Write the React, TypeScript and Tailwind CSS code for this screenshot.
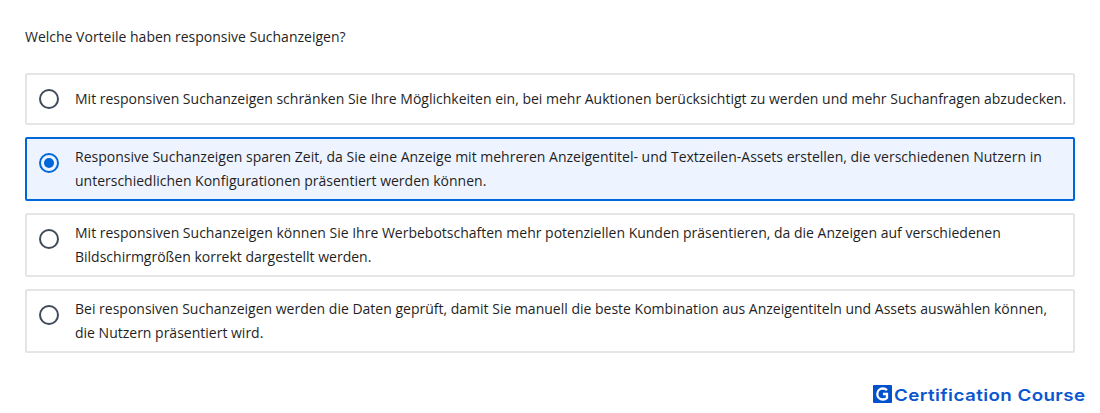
const options = [
  { text: ["Mit responsiven Suchanzeigen schränken Sie Ihre Möglichkeiten ein, bei mehr Auktionen berücksichtigt zu werden und mehr Suchanfragen abzudecken."], selected: false },
  { text: ["Responsive Suchanzeigen sparen Zeit, da Sie eine Anzeige mit mehreren Anzeigentitel- und Textzeilen-Assets erstellen, die verschiedenen Nutzern in", "unterschiedlichen Konfigurationen präsentiert werden können."], selected: true },
  { text: ["Mit responsiven Suchanzeigen können Sie Ihre Werbebotschaften mehr potenziellen Kunden präsentieren, da die Anzeigen auf verschiedenen", "Bildschirmgrößen korrekt dargestellt werden."], selected: false },
  { text: ["Bei responsiven Suchanzeigen werden die Daten geprüft, damit Sie manuell die beste Kombination aus Anzeigentiteln und Assets auswählen können,", "die Nutzern präsentiert wird."], selected: false },
];

function Radio({ selected }: { selected: boolean }) {
  return (
    <span className={selected ? "mt-3.5 flex size-5 shrink-0 items-center justify-center self-start rounded-full border-2 border-[#0067db]" : "mt-3.5 flex size-5 shrink-0 items-center justify-center self-start rounded-full border-2 border-[#414b5a] bg-white"}>
      {selected && <span className="size-2.5 rounded-full bg-[#0067db]" />}
    </span>
  );
}

export default function App() {
  return (
    <main className="flex h-[413px] w-[1100px] flex-col bg-white px-[25px] pt-[25px] font-['Open_Sans',sans-serif] text-sm leading-6 text-[#1f1f1f]">
      <p>Welche Vorteile haben responsive Suchanzeigen?</p>
      <div className="mt-6 flex flex-col gap-3">
        {options.map((o) => (
          <label
            key={o.text[0]}
            className={
              (o.selected ? "border-[#0067db] bg-[#eef4ff] " : "border-[#e5e5e5] bg-white ") +
              (o.text.length > 1 ? "h-16 " : "h-[52px] ") +
              "flex items-center gap-4 rounded-xs border-2 pl-3"
            }
          >
            <Radio selected={o.selected} />
            <span className="flex flex-col whitespace-nowrap">
              {o.text.map((line) => <span key={line}>{line}</span>)}
            </span>
          </label>
        ))}
      </div>
      <footer className="mt-[29px] -mr-[10px] flex h-6 items-center justify-end gap-[2px]">
        <svg width="19" height="18" viewBox="0 0 19 18">
          <rect width="19" height="18" rx="1" fill="#0052cc" />
          <path d="M14 5.1C12.8 4 11.5 3.5 9.9 3.5C6.8 3.5 4.3 5.8 4.3 9S6.8 14.5 9.9 14.5C11.5 14.5 13 14 14 13V9H9.9" fill="none" stroke="white" strokeWidth="2.3" />
        </svg>
        <span className="w-[191px] origin-left scale-x-[1.139] whitespace-nowrap pt-px font-['Inter',sans-serif] text-[16.5px] font-semibold tracking-[0.35px] text-[#0b57d0]">Certification Course</span>
      </footer>
    </main>
  );
}
